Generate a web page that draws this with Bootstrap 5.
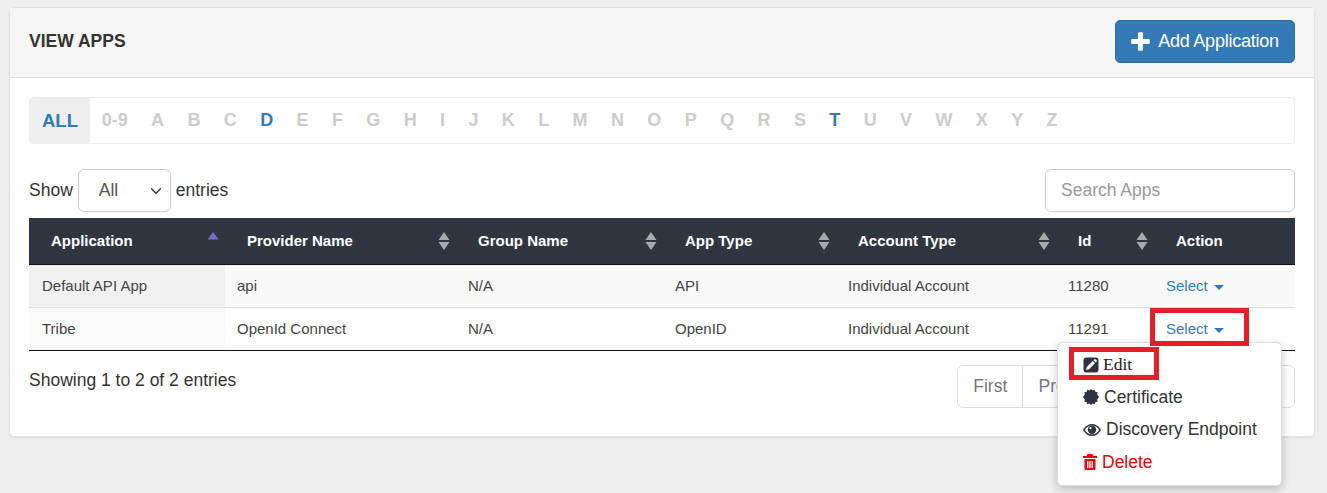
<!DOCTYPE html>
<html lang="en">
<head>
<meta charset="utf-8">
<title>View Apps</title>
<link rel="stylesheet" href="https://cdn.jsdelivr.net/npm/bootstrap@5.3.0/dist/css/bootstrap.min.css">
<style>
html,body{height:493px;overflow:hidden}
body{background:#eee;color:#333;font-family:"Liberation Sans",Arial,sans-serif;font-size:17.5px;padding:7px 12px 0 9px}
.apps-panel{border:1px solid #e3e3e3;border-radius:5px;height:430px;box-shadow:0 1px 2px rgba(0,0,0,.06);--bs-card-bg:#fff}
.apps-head{height:70px;background:#f5f5f5;border-bottom:1px solid #ddd;padding:12px 19px 0 19px}
.apps-title{font-size:17.5px;font-weight:700;color:#333;line-height:43px;margin:0}
.add-btn{height:43px;width:180px;background:#337ab7;border:1px solid #2e6da4;border-radius:5px;font-size:18px;letter-spacing:-.25px;display:flex;align-items:center;justify-content:center;gap:8px;padding:0}
.apps-body{padding:19px 19px 0 19px}
.alpha-bar{height:47px;border:1px solid #eee;border-radius:4px;font-weight:700;font-size:18px}
.alpha-bar a{padding:0 11.7px;color:#ccc;text-decoration:none;line-height:45px;display:block}
.alpha-bar a.on{color:#337ab7}
.alpha-bar a.all-on{background:#eee;color:#337ab7;padding:0 12px;font-size:18.5px}
.tools{margin-top:25px;height:43px}
.len-select{width:93px;height:43px;margin:0 5px;padding:0 0 0 20px;font-size:17.5px;color:#555;border-color:#ccc;background-position:right 6px center}
.search-box{width:250px;height:43px;font-size:17.5px;padding:0 15px;border-color:#ccc}
.search-box::placeholder{color:#999}
.apps-table{table-layout:fixed;width:1266px;margin:6px 0 0;font-size:15px;color:#444;--bs-table-bg:transparent;--bs-table-border-color:#ddd}
.w-a{width:196px}.w-b{width:231px}.w-c{width:207px}.w-d{width:173px}.w-e{width:220px}.w-f{width:98px}.w-g{width:141px}
.apps-table thead th{background:#2f3640;color:#fff;height:46px;padding:0 0 0 22px;font-size:15px;font-weight:700;vertical-align:middle;border-bottom:1px solid #111;position:relative}
.sort-mark{position:absolute;top:14px;right:6px;width:12px;height:18px}
.apps-table td{height:43px;padding:2px 0 0 12px;vertical-align:middle;border-bottom:1px solid #ddd}
.apps-table td:first-child{padding-left:13px}
.row-odd td{background:#f9f9f9}
.row-odd td:first-child{background:#f1f1f1}
.row-even td:first-child{background:#fafafa}
.row-even td{border-bottom-color:#111}
.sel-link{color:#337ab7;text-decoration:none}
.sel-caret{display:inline-block;border-top:5px solid #337ab7;border-left:5px solid transparent;border-right:5px solid transparent;margin-left:6px;vertical-align:1px}
.mark-a{position:absolute;left:-16px;top:-10px;width:99px;height:38px;border:5px solid #e41e2b;pointer-events:none;z-index:6}
.mark-b{position:absolute;left:11px;top:4px;width:90px;height:33px;border:5px solid #e41e2b;pointer-events:none;z-index:2}
.act-menu{position:absolute;left:-109px;top:24px;width:225px;height:144px;padding:5px 0;border:1px solid #ddd;border-radius:5px;box-shadow:0 3px 8px rgba(0,0,0,.22);z-index:5;background:#fff}
.act-item{display:flex;align-items:center;gap:5px;height:32.5px;padding:0 0 0 25px;font-size:17.5px;color:#333;background:none;white-space:nowrap}
.act-item svg{flex:none}
.act-edit{font-family:"Liberation Serif",serif;font-size:17.5px;color:#222;gap:4px}
.act-del{color:#e3000f}
.foot-row{margin-top:14px}
.foot-info{margin-top:2px;color:#333}
.pager{margin:0;--bs-pagination-color:#777;--bs-pagination-border-color:#ddd;--bs-pagination-padding-x:15.1px;--bs-pagination-padding-y:9px;--bs-pagination-font-size:17.5px;height:43px}
.pager .page-link{height:43px;line-height:23px;color:#777}
</style>
</head>
<body>
<div class="card apps-panel">
  <div class="apps-head d-flex justify-content-between align-items-start">
    <h1 class="apps-title">VIEW APPS</h1>
    <button type="button" class="btn btn-primary add-btn">
      <svg width="19" height="19" viewBox="0 0 19 19" aria-hidden="true"><path fill="#fff" d="M7 1.200q0-1 1-1h3q1 0 1 1V7h5.800q1 0 1 1v3q0 1-1 1H12v5.800q0 1-1 1H8q-1 0-1-1V12H1.200q-1 0-1-1V8q0-1 1-1H7z"/></svg>
      Add Application
    </button>
  </div>
  <div class="apps-body">
    <div class="alpha-bar d-flex">
      <a class="all-on" href="#">ALL</a><a href="#">0-9</a><a href="#">A</a><a href="#">B</a><a href="#">C</a><a class="on" href="#">D</a><a href="#">E</a><a href="#">F</a><a href="#">G</a><a href="#">H</a><a href="#">I</a><a href="#">J</a><a href="#">K</a><a href="#">L</a><a href="#">M</a><a href="#">N</a><a href="#">O</a><a href="#">P</a><a href="#">Q</a><a href="#">R</a><a href="#">S</a><a class="on" href="#">T</a><a href="#">U</a><a href="#">V</a><a href="#">W</a><a href="#">X</a><a href="#">Y</a><a href="#">Z</a>
    </div>
    <div class="tools d-flex justify-content-between align-items-center">
      <div class="d-flex align-items-center">Show
        <select class="form-select len-select" aria-label="Entries"><option>All</option></select>
        entries</div>
      <input class="form-control search-box" type="text" placeholder="Search Apps" aria-label="Search Apps">
    </div>
    <table class="table apps-table">
      <colgroup><col class="w-a"><col class="w-b"><col class="w-c"><col class="w-d"><col class="w-e"><col class="w-f"><col class="w-g"></colgroup>
      <thead>
        <tr>
          <th>Application<svg class="sort-mark" viewBox="0 0 12 18" aria-hidden="true"><path fill="#6f6fd0" d="M6 0l5.500 7.500H.5z"/></svg></th>
          <th>Provider Name<svg class="sort-mark" viewBox="0 0 12 18" aria-hidden="true"><path fill="#aaa" d="M6 0l5.500 8H.5zM.5 10h11L6 18z"/></svg></th>
          <th>Group Name<svg class="sort-mark" viewBox="0 0 12 18" aria-hidden="true"><path fill="#aaa" d="M6 0l5.500 8H.5zM.5 10h11L6 18z"/></svg></th>
          <th>App Type<svg class="sort-mark" viewBox="0 0 12 18" aria-hidden="true"><path fill="#aaa" d="M6 0l5.500 8H.5zM.5 10h11L6 18z"/></svg></th>
          <th>Account Type<svg class="sort-mark" viewBox="0 0 12 18" aria-hidden="true"><path fill="#aaa" d="M6 0l5.500 8H.5zM.5 10h11L6 18z"/></svg></th>
          <th>Id<svg class="sort-mark" viewBox="0 0 12 18" aria-hidden="true"><path fill="#aaa" d="M6 0l5.500 8H.5zM.5 10h11L6 18z"/></svg></th>
          <th>Action</th>
        </tr>
      </thead>
      <tbody>
        <tr class="row-odd"><td>Default API App</td><td>api</td><td>N/A</td><td>API</td><td>Individual Account</td><td>11280</td><td><a class="sel-link" href="#">Select<span class="sel-caret"></span></a></td></tr>
        <tr class="row-even"><td>Tribe</td><td>OpenId Connect</td><td>N/A</td><td>OpenID</td><td>Individual Account</td><td>11291</td>
          <td><div class="dropdown"><a class="sel-link" href="#">Select<span class="sel-caret"></span></a>
            <span class="mark-a"></span>
            <div class="act-menu">
              <span class="mark-b"></span>
              <a class="dropdown-item act-item act-edit" href="#"><svg width="16" height="16" viewBox="0 0 16 16" aria-hidden="true"><rect x=".5" y=".5" width="15" height="15" rx="3" fill="#2b3440"/><path fill="#fff" d="M3 13l.7-3 6-6 2.300 2.300-6 6zM10.500 3.200l.9-.9q.5-.4 1 0l1.300 1.300q.4.5 0 1l-.9.9z"/></svg>Edit</a>
              <a class="dropdown-item act-item" href="#"><svg width="16" height="16" viewBox="0 0 16 16" aria-hidden="true"><path fill="#2b3440" d="M8 0l1.600 1.500L11.700.8l.7 2.100 2.200.4-.4 2.200L16 8l-1.800 2.500.4 2.200-2.200.4-.7 2.100-2.100-.7L8 16l-1.600-1.500-2.100.7-.7-2.100-2.200-.4.4-2.200L0 8l1.800-2.500-.4-2.200 2.200-.4.7-2.100 2.100.7z"/></svg>Certificate</a>
              <a class="dropdown-item act-item" href="#"><svg width="18" height="14" viewBox="0 0 18 14" aria-hidden="true"><path fill="none" stroke="#2b3440" stroke-width="1.400" d="M.8 7C3 3.600 5.700 1.800 9 1.800S15 3.600 17.200 7C15 10.400 12.300 12.200 9 12.200S3 10.400.8 7z"/><circle cx="9" cy="6.800" r="4.200" fill="#2b3440"/><circle cx="7.500" cy="5.200" r="1.100" fill="#fff"/></svg>Discovery Endpoint</a>
              <a class="dropdown-item act-item act-del" href="#"><svg width="14" height="16" viewBox="0 0 14 16" aria-hidden="true"><path fill="#e3000f" fill-rule="evenodd" d="M4.500 0h5l1 2H14v2H0V2h3.500zM1.500 5h11v10q0 1-1 1h-9q-1 0-1-1zM4 7v7h1.400V7zm2.300 0v7h1.400V7zm2.300 0v7H10V7z"/></svg>Delete</a>
            </div>
          </div></td></tr>
      </tbody>
    </table>
    <div class="foot-row d-flex justify-content-between align-items-start">
      <div class="foot-info">Showing 1 to 2 of 2 entries</div>
      <ul class="pagination pager">
        <li class="page-item"><a class="page-link" href="#">First</a></li>
        <li class="page-item"><a class="page-link" href="#">Previous</a></li>
        <li class="page-item"><a class="page-link" href="#">1</a></li>
        <li class="page-item"><a class="page-link" href="#">Next</a></li>
        <li class="page-item"><a class="page-link" href="#">Last</a></li>
      </ul>
    </div>
  </div>
</div>
<script src="https://cdn.jsdelivr.net/npm/bootstrap@5.3.0/dist/js/bootstrap.bundle.min.js"></script>
</body>
</html>
